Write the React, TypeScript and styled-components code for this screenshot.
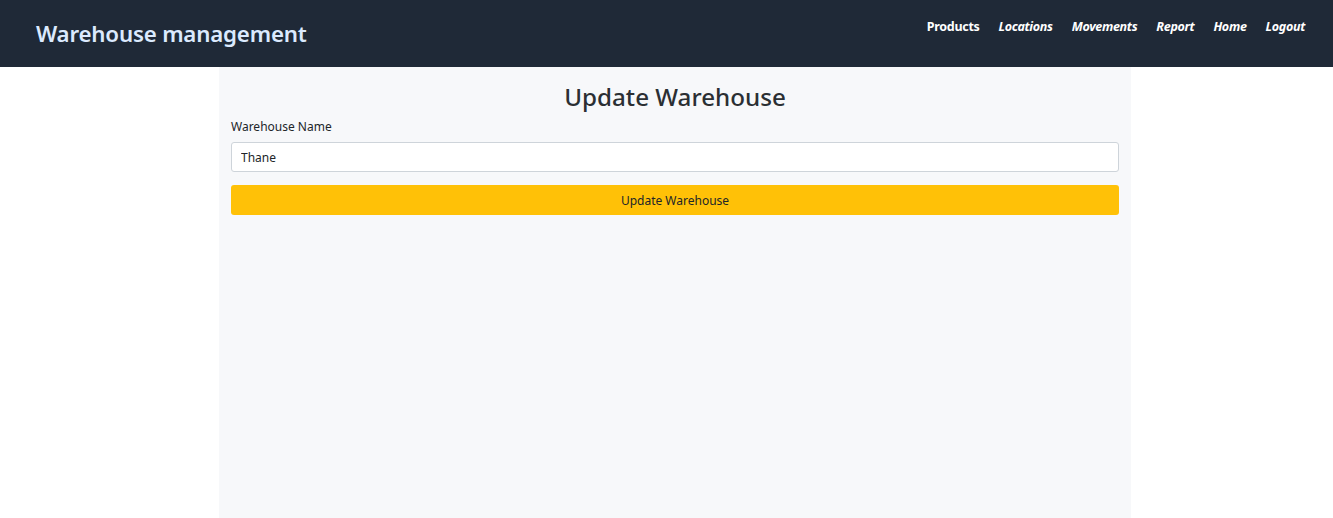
import React from "react";
import styled, { createGlobalStyle } from "styled-components";

const GlobalStyle = createGlobalStyle`
  html, body { margin: 0; padding: 0; background: #ffffff; }
  body { font-family: "Noto Sans", "Open Sans", sans-serif; color: #212529; }
  * { box-sizing: border-box; }
`;

const Header = styled.header`
  height: 67px;
  background: #1f2937;
  display: flex;
  align-items: center;
  justify-content: space-between;
  padding: 0 28px 0 36px;
`;

const Brand = styled.div`
  color: #dbeafe;
  font-size: 22.3px;
  font-weight: 600;
  letter-spacing: -0.2px;
`;

const Nav = styled.nav`
  display: flex;
  gap: 19px;
  margin-top: -15px;
`;

const NavLink = styled.a<{ $italic?: boolean }>`
  color: #ffffff;
  font-size: 12.5px;
  font-weight: 700;
  font-style: ${(p) => (p.$italic ? "italic" : "normal")};
  text-decoration: none;
  letter-spacing: -0.3px;
`;

const Main = styled.main`
  display: flex;
  justify-content: center;
  padding-left: 17px;
`;

const Panel = styled.section`
  width: 912px;
  min-height: 451px;
  background: #f7f8fa;
  padding: 12px 12px;
`;

const Title = styled.h1`
  margin: 0 0 3px;
  text-align: center;
  font-size: 24.2px;
  font-weight: 500;
  color: #2b2f33;
  line-height: 36px;
`;

const Label = styled.label`
  display: block;
  font-size: 12px;
  color: #212529;
  margin-bottom: 6px;
  line-height: 18px;
`;

const Input = styled.input`
  display: block;
  width: 100%;
  height: 30px;
  border: 1px solid #ced4da;
  border-radius: 3px;
  background: #ffffff;
  padding: 0 9px;
  font-family: inherit;
  font-size: 12px;
  color: #212529;
  margin-bottom: 13px;
  outline: none;
`;

const Button = styled.button`
  display: block;
  width: 100%;
  height: 30px;
  border: none;
  border-radius: 3px;
  background: #ffc107;
  font-family: inherit;
  font-size: 12px;
  color: #212529;
  padding-top: 2px;
  cursor: pointer;
`;

export default function App() {
  const links = [
    { label: "Products", italic: false },
    { label: "Locations", italic: true },
    { label: "Movements", italic: true },
    { label: "Report", italic: true },
    { label: "Home", italic: true },
    { label: "Logout", italic: true },
  ];
  return (
    <>
      <GlobalStyle />
      <Header>
        <Brand>Warehouse management</Brand>
        <Nav>
          {links.map((l) => (
            <NavLink key={l.label} href="#" $italic={l.italic}>
              {l.label}
            </NavLink>
          ))}
        </Nav>
      </Header>
      <Main>
        <Panel>
          <Title>Update Warehouse</Title>
          <Label htmlFor="wname">Warehouse Name</Label>
          <Input id="wname" defaultValue="Thane" />
          <Button>Update Warehouse</Button>
        </Panel>
      </Main>
    </>
  );
}
